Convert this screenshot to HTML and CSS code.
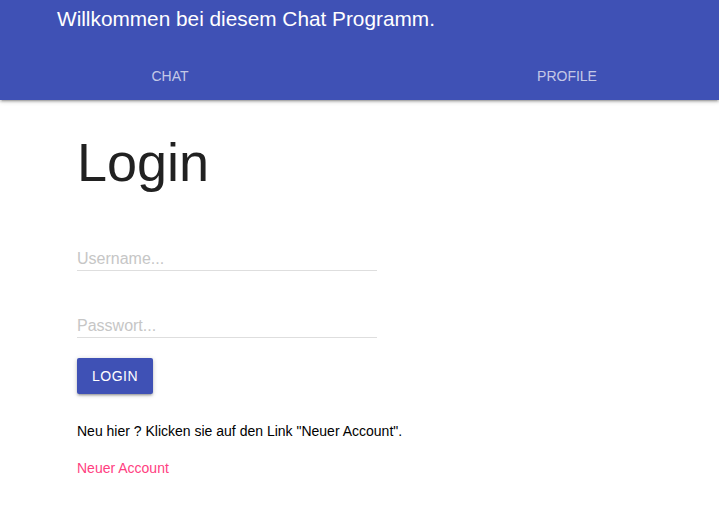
FILE: index.html
```html
<!DOCTYPE html>
<html lang="de">
<head>
<meta charset="utf-8">
<title>Chat Programm</title>
<link rel="stylesheet" href="styles.css">
</head>
<body>
<header class="topbar">
  <div class="brand">Willkommen bei diesem Chat Programm.</div>
  <nav class="tabs">
    <a class="tab tab-chat" href="#">CHAT</a>
    <a class="tab tab-profile" href="#">PROFILE</a>
  </nav>
</header>
<main class="content">
  <h1 class="heading">Login</h1>
  <form class="form">
    <input class="field field-user" type="text" placeholder="Username...">
    <input class="field field-pass" type="password" placeholder="Passwort...">
    <button class="btn" type="button">LOGIN</button>
  </form>
  <p class="hint">Neu hier ? Klicken sie auf den Link "Neuer Account".</p>
  <a class="link" href="#">Neuer Account</a>
</main>
</body>
</html>
```
FILE: styles.css
```css
html, body {
  margin: 0;
  padding: 0;
  background: #fff;
  font-family: "Liberation Sans", Arial, sans-serif;
  color: rgba(0, 0, 0, 0.87);
}

.topbar {
  background: #3f51b5;
  height: 100px;
  overflow: hidden;
  box-shadow: 0 2px 2px 0 rgba(0,0,0,.14), 0 3px 1px -2px rgba(0,0,0,.12), 0 1px 5px 0 rgba(0,0,0,.2);
  position: relative;
}

.brand {
  height: 52px;
  line-height: 38px;
  padding-left: 57px;
  font-size: 20.8px;
  color: #fff;
}

.tabs {
  display: flex;
  height: 48px;
  width: 794px;
}

.tab {
  display: block;
  text-align: center;
  line-height: 48px;
  font-size: 14px;
  color: rgba(255, 255, 255, 0.7);
  text-decoration: none;
}

.tab-chat { flex: 0 0 340px; }
.tab-profile { flex: 0 0 454px; }

.content {
  padding-left: 77px;
  display: flex;
  flex-direction: column;
  align-items: flex-start;
}

.heading {
  margin: 30px 0 0;
  font-size: 54px;
  line-height: 65px;
  font-weight: 400;
  color: #212121;
}

.form {
  display: flex;
  flex-direction: column;
  align-items: flex-start;
  margin-top: 49px;
}

.field {
  box-sizing: border-box;
  width: 300px;
  height: 27px;
  padding: 4px 0 0;
  border: none;
  border-bottom: 1px solid #dedede;
  outline: none;
  font-family: "Liberation Sans", Arial, sans-serif;
  font-size: 16px;
  color: rgba(0,0,0,0.87);
  background: transparent;
}

.field::placeholder { color: #c6c6c6; }

.field-pass { margin-top: 40px; }

.btn {
  margin-top: 20px;
  height: 36px;
  width: 76px;
  padding: 0;
  border: none;
  border-radius: 2px;
  background: #3f51b5;
  color: #fff;
  font-family: "Liberation Sans", Arial, sans-serif;
  font-size: 14px;
  letter-spacing: .5px;
  box-shadow: 0 2px 2px 0 rgba(0,0,0,.14), 0 3px 1px -2px rgba(0,0,0,.12), 0 1px 5px 0 rgba(0,0,0,.2);
}

.hint {
  margin: 29px 0 0;
  font-size: 14px;
  line-height: 16px;
  color: #000;
}

.link {
  margin-top: 21px;
  font-size: 14px;
  line-height: 16px;
  color: #ff4081;
  text-decoration: none;
}
```
